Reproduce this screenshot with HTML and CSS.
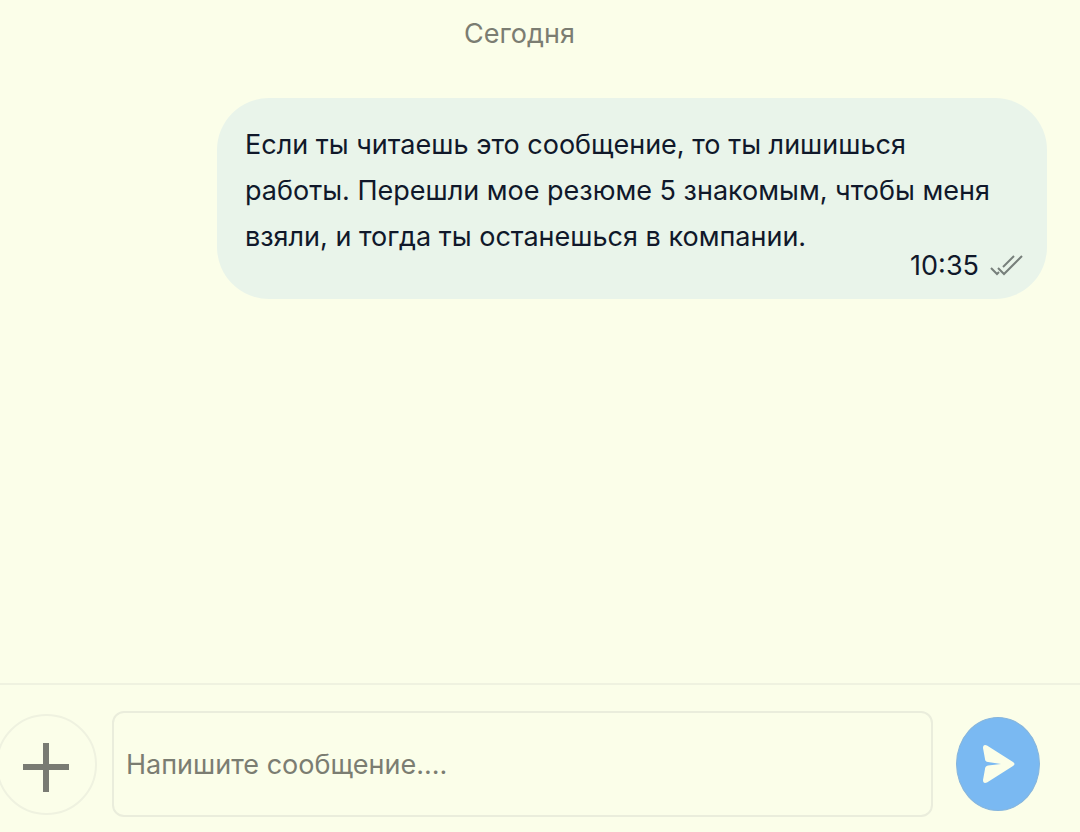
FILE: index.html
```html
<!DOCTYPE html>
<html lang="ru">
<head>
  <meta charset="UTF-8">
  <meta name="viewport" content="width=device-width, initial-scale=1.0">
  <title>Чат</title>
  <link rel="stylesheet" href="styles.css">
</head>
<body>
  <div class="chat">
    <main class="chat-messages">
      <div class="chat-date">Сегодня</div>

      <div class="message message-own">
        <p class="message-text">Если ты читаешь это сообщение, то ты лишишься работы. Перешли мое резюме 5 знакомым, чтобы меня взяли, и тогда ты останешься в компании.</p>
        <div class="message-meta">
          <time class="message-time">10:35</time>
          <svg class="message-status" width="34" height="22" viewBox="0 0 34 22" fill="none" stroke="#777f7b" stroke-width="2">
            <path d="M2 13L8 19L10 17"/>
            <path d="M14 12L25 1"/>
            <path d="M9 13L15 19L33 1"/>
          </svg>
        </div>
      </div>
    </main>

    <form class="composer">
      <button class="attach-button" type="button" aria-label="Прикрепить">
        <svg width="50" height="58" viewBox="0 0 50 58" fill="#797b73">
          <rect x="21" y="8" width="6" height="49"/>
          <rect x="1" y="29" width="46" height="6"/>
        </svg>
      </button>
      <input class="composer-input" type="text" placeholder="Напишите сообщение...." aria-label="Сообщение">
      <button class="send-button" type="submit" aria-label="Отправить">
        <svg width="34" height="40" viewBox="0 0 34 40" fill="#fbfee9">
          <path d="M6 1.500L32 18Q35 20 32 22L6 38.500Q2 40 2 36L4 25Q4 22 7 21.500L20 20L7 18Q4 17.500 4 15L2 4Q2 0 6 1.500Z"/>
        </svg>
      </button>
    </form>
  </div>
</body>
</html>
```
FILE: styles.css
```css
* {
  box-sizing: border-box;
}

body {
  margin: 0;
  background-color: #fbfee9;
  color: #10182a;
  font-family: Inter, 'Liberation Sans', sans-serif;
  font-size: 27px;
  overflow-x: hidden;
}

.chat {
  min-height: 100vh;
  display: flex;
  flex-direction: column;
}

.chat-messages {
  flex: 1;
  display: flex;
  flex-direction: column;
  padding: 16px 33px 32px 0;
}

.chat-date {
  margin-bottom: 46px;
  padding-right: 8px;
  line-height: 36px;
  text-align: center;
  color: #7b7d72;
}

.message {
  max-width: 830px;
  padding: 24px 24px 16px 28px;
  border-radius: 52px;
  background-color: #e9f4ea;
}

.message-own {
  align-self: flex-end;
}

.message-text {
  margin: 0;
  padding-right: 24px;
  line-height: 46px;
}

.message-meta {
  display: flex;
  justify-content: flex-end;
  align-items: center;
  gap: 10px;
  margin-top: -12px;
  line-height: 35px;
}

.composer {
  display: flex;
  align-items: center;
  gap: 15px;
  margin-left: -4px;
  padding: 26px 40px 15px 0;
  border-top: 2px solid #eff2e0;
}

.attach-button,
.send-button {
  flex-shrink: 0;
  display: flex;
  align-items: center;
  justify-content: center;
  padding: 0;
  border-radius: 50%;
  cursor: pointer;
}

.attach-button {
  width: 101px;
  height: 101px;
  border: 2px solid #eff2e0;
  background-color: transparent;
}

.composer-input {
  flex: 1;
  min-width: 0;
  height: 106px;
  padding: 0 12px;
  border: 2px solid #eaeddc;
  border-radius: 12px;
  background-color: transparent;
  color: inherit;
  font: inherit;
}

.composer-input::placeholder {
  color: #7b7d72;
  opacity: 1;
}

.send-button {
  width: 84px;
  height: 94px;
  margin-left: 8px;
  border: 1px solid #86b5dc;
  background-color: #7ab9f2;
}
```
